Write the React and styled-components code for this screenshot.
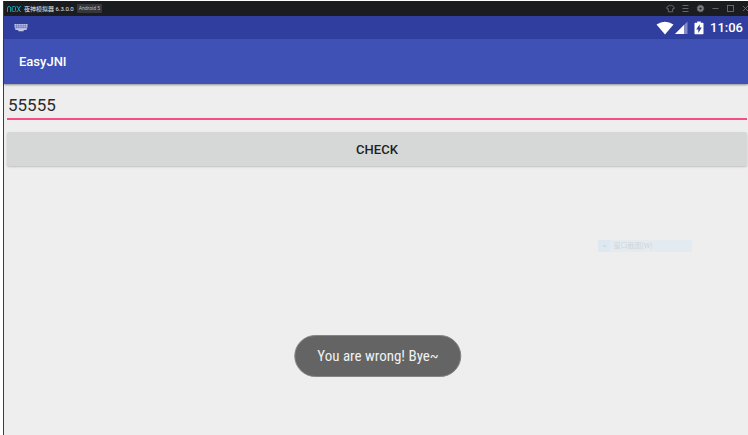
import React, { useState } from 'react';
import styled, { createGlobalStyle, css } from 'styled-components';

const INDIGO = '#3f51b5';
const INDIGO_DARK = '#303f9f';
const PINK = '#f54d84';
const SURFACE = '#eeeeee';
const TITLE_BG = '#1b1c20';
const TITLE_ICON = '#77797d';

const GlobalStyle = createGlobalStyle`
  * {
    box-sizing: border-box;
  }
  body {
    margin: 0;
    background-color: #fff;
    font-family: Roboto, 'Noto Sans CJK SC', sans-serif;
  }
`;

const centerFlex = css`
  display: flex;
  align-items: center;
`;

const EmulatorWindow = styled.div`
  display: flex;
  flex-direction: column;
  min-height: calc(100vh - 1px);
  margin: 1px 0 0 3px;
  border-left: 1px solid #3c3d40;
  background-color: ${SURFACE};
`;

const TitleBar = styled.header`
  ${centerFlex}
  height: 15px;
  padding-left: 3px;
  background-color: ${TITLE_BG};
`;

const TitleText = styled.span`
  margin-left: 3px;
  color: #e4e5e6;
  font-size: 6px;
  line-height: 12px;
  white-space: nowrap;
`;

const VersionBadge = styled.span`
  margin-left: 3px;
  padding: 0 2px;
  border-radius: 1px;
  background-color: #36373b;
  color: #b8babd;
  font-size: 5px;
  line-height: 9px;
  white-space: nowrap;
`;

const WindowControls = styled.div`
  ${centerFlex}
  gap: 5px;
  margin-left: auto;
  margin-right: -2px;
`;

const ControlButton = styled.button`
  ${centerFlex}
  justify-content: center;
  width: 10px;
  height: 12px;
  padding: 0;
  border: 0;
  background: none;
  color: ${TITLE_ICON};
`;

const StatusBar = styled.div`
  ${centerFlex}
  height: 23px;
  padding: 0 5px 0 10px;
  background-color: ${INDIGO_DARK};
  color: #fff;
`;

const StatusIcons = styled.div`
  ${centerFlex}
  margin-left: auto;
`;

const Clock = styled.time`
  margin-left: 6px;
  font-size: 13px;
  font-weight: 500;
  line-height: 22px;
`;

const AppBar = styled.div`
  ${centerFlex}
  height: 45px;
  padding-left: 15px;
  background-color: ${INDIGO};
  box-shadow: 0 1px 2px rgba(0, 0, 0, 0.4);
`;

const AppTitle = styled.h1`
  margin: 0;
  color: #fff;
  font-size: 13px;
  font-weight: 500;
  line-height: 22px;
`;

const Content = styled.form`
  display: flex;
  flex-direction: column;
  gap: 12px;
  padding: 8px 1px 0 3px;
`;

const CodeInput = styled.input`
  width: 100%;
  height: 28px;
  padding: 0 1px;
  border: 0;
  border-bottom: 2px solid ${PINK};
  border-radius: 0;
  outline: 0;
  background: none;
  color: #2b2b2b;
  font-family: inherit;
  font-size: 17px;
`;

const CheckButton = styled.button`
  height: 34px;
  padding: 0;
  border: 0;
  border-radius: 2px;
  background-color: #d6d8d7;
  box-shadow: 0 1px 2px rgba(0, 0, 0, 0.2);
  color: #212121;
  font-family: inherit;
  font-size: 13px;
  font-weight: 500;
`;

const Toast = styled.div`
  position: fixed;
  bottom: 58px;
  left: 50%;
  transform: translateX(-50%);
  margin-left: 4px;
  padding: 11px 22px;
  border: 1px solid #858585;
  border-radius: 21px;
  background-color: #646464;
  color: #f1f1f1;
  font-family: 'Roboto Condensed', Roboto, sans-serif;
  font-size: 15px;
  line-height: 18px;
  white-space: nowrap;
`;

const GhostMenuItem = styled.div`
  ${centerFlex}
  position: fixed;
  top: 240px;
  left: 80%;
  width: 94px;
  height: 12px;
  background-color: #e4ebf0;
  color: #d0d6d9;
  font-size: 7px;
  line-height: 12px;
  white-space: nowrap;
`;

const GhostIcon = styled.span`
  ${centerFlex}
  justify-content: center;
  width: 12px;
  height: 12px;
  margin-right: 3px;
  background-color: #dde8f0;
`;

const NoxLogo = () => (
  <svg
    width="14"
    height="8"
    viewBox="0 0 14 8"
    fill="none"
    stroke="#12a5b5"
    strokeWidth="1"
  >
    <path d="M.5 7V3Q.5 1.500 2 1.500Q3.700 1.500 3.700 3V7" />
    <rect x="5.2" y="1.5" width="3.3" height="5" rx="1" />
    <path d="M9.500 1.500H10.500L11.700 4L10.500 6.500H9.500M13.800 1.500H13L11.700 4L13 6.500H13.800" />
  </svg>
);

// rows of keys with the space bar below
const KeyboardIcon = () => (
  <svg width="14" height="9" viewBox="0 0 14 9">
    <path d="M.5 1H13.500V4L12.500 7H1.500L.5 4Z" fill="#c3c8e8" />
    <path
      d="M.5 2.900H13.500M.5 4.800H13.500M2.700 1V5M4.800 1V5M7 1V5M9.200 1V5M11.300 1V5"
      stroke={INDIGO_DARK}
      strokeWidth=".4"
    />
    <path d="M4 6.500H10L9.500 8.200H4.500Z" fill="#c3c8e8" />
  </svg>
);

const WifiIcon = () => (
  <svg width="18" height="14" viewBox="0 0 18 14" fill="#fff">
    <path d="M.5 3.500Q9-2 17.500 3.500L9 13.500Z" />
  </svg>
);

const SignalIcon = () => (
  <svg width="14" height="14" viewBox="0 0 14 14" fill="#fff">
    <path d="M13.500 .5V13H1Z" fillOpacity=".4" />
    <path d="M10 4V13H1Z" />
  </svg>
);

const BatterySvg = styled.svg`
  margin-left: 6px;
`;

const BatteryIcon = () => (
  <BatterySvg width="10" height="14" viewBox="0 0 10 14">
    <path
      d="M3.200 .5H6.800V1.700H8.800Q9.500 1.700 9.500 2.400V12.500Q9.500 13.200 8.800 13.200H1.200Q.5 13.200 .5 12.500V2.400Q.5 1.700 1.200 1.700H3.200Z"
      fill="#fff"
    />
    <path
      d="M5.700 3.300V6.600H7.800L4.300 11.900V8.500H2.200Z"
      fill={INDIGO_DARK}
    />
  </BatterySvg>
);

const CONTROLS = [
  {
    label: 'Skin',
    icon: (
      <path d="M3.200 1.300L.8 3.200V4.700H2.300V7.800H6.700V4.700H8.200V3.200L5.800 1.300Q4.500 2.300 3.200 1.300Z" />
    ),
  },
  {
    label: 'Menu',
    icon: <path d="M1.500 1.500H7.500M1.500 4.500H7.500M1.500 7.500H7.500" />,
  },
  {
    label: 'Settings',
    icon: (
      <>
        <circle cx="4.5" cy="4.5" r="2.1" strokeWidth="2.2" />
        <circle cx="4.5" cy="4.5" r="3.3" strokeDasharray="1.3 1.3" />
      </>
    ),
  },
  { label: 'Minimize', icon: <path d="M1.500 4.500H7.500" /> },
  { label: 'Maximize', icon: <rect x="1.5" y="1.5" width="6" height="6" /> },
  { label: 'Close', icon: <path d="M2 2L7 7M7 2L2 7" /> },
];

const App = () => {
  const [code, setCode] = useState('55555');

  return (
    <>
      <GlobalStyle />
      <EmulatorWindow>
        <TitleBar>
          <NoxLogo />
          <TitleText>夜神模拟器 6.3.0.0</TitleText>
          <VersionBadge>Android 5</VersionBadge>
          <WindowControls>
            {CONTROLS.map(({ label, icon }) => (
              <ControlButton key={label} type="button" aria-label={label}>
                <svg
                  width="9"
                  height="9"
                  viewBox="0 0 9 9"
                  fill="none"
                  stroke="currentColor"
                  strokeWidth=".8"
                >
                  {icon}
                </svg>
              </ControlButton>
            ))}
          </WindowControls>
        </TitleBar>
        <StatusBar>
          <KeyboardIcon />
          <StatusIcons>
            <WifiIcon />
            <SignalIcon />
            <BatteryIcon />
            <Clock>11:06</Clock>
          </StatusIcons>
        </StatusBar>
        <AppBar>
          <AppTitle>EasyJNI</AppTitle>
        </AppBar>
        <Content onSubmit={e => e.preventDefault()}>
          <CodeInput
            type="text"
            aria-label="Code"
            value={code}
            onChange={e => setCode(e.target.value)}
          />
          <CheckButton type="submit">CHECK</CheckButton>
        </Content>
      </EmulatorWindow>
      <GhostMenuItem>
        <GhostIcon>▪</GhostIcon>
        窗口截图(W)
      </GhostMenuItem>
      <Toast role="status">You are wrong! Bye~</Toast>
    </>
  );
};

export default App;
